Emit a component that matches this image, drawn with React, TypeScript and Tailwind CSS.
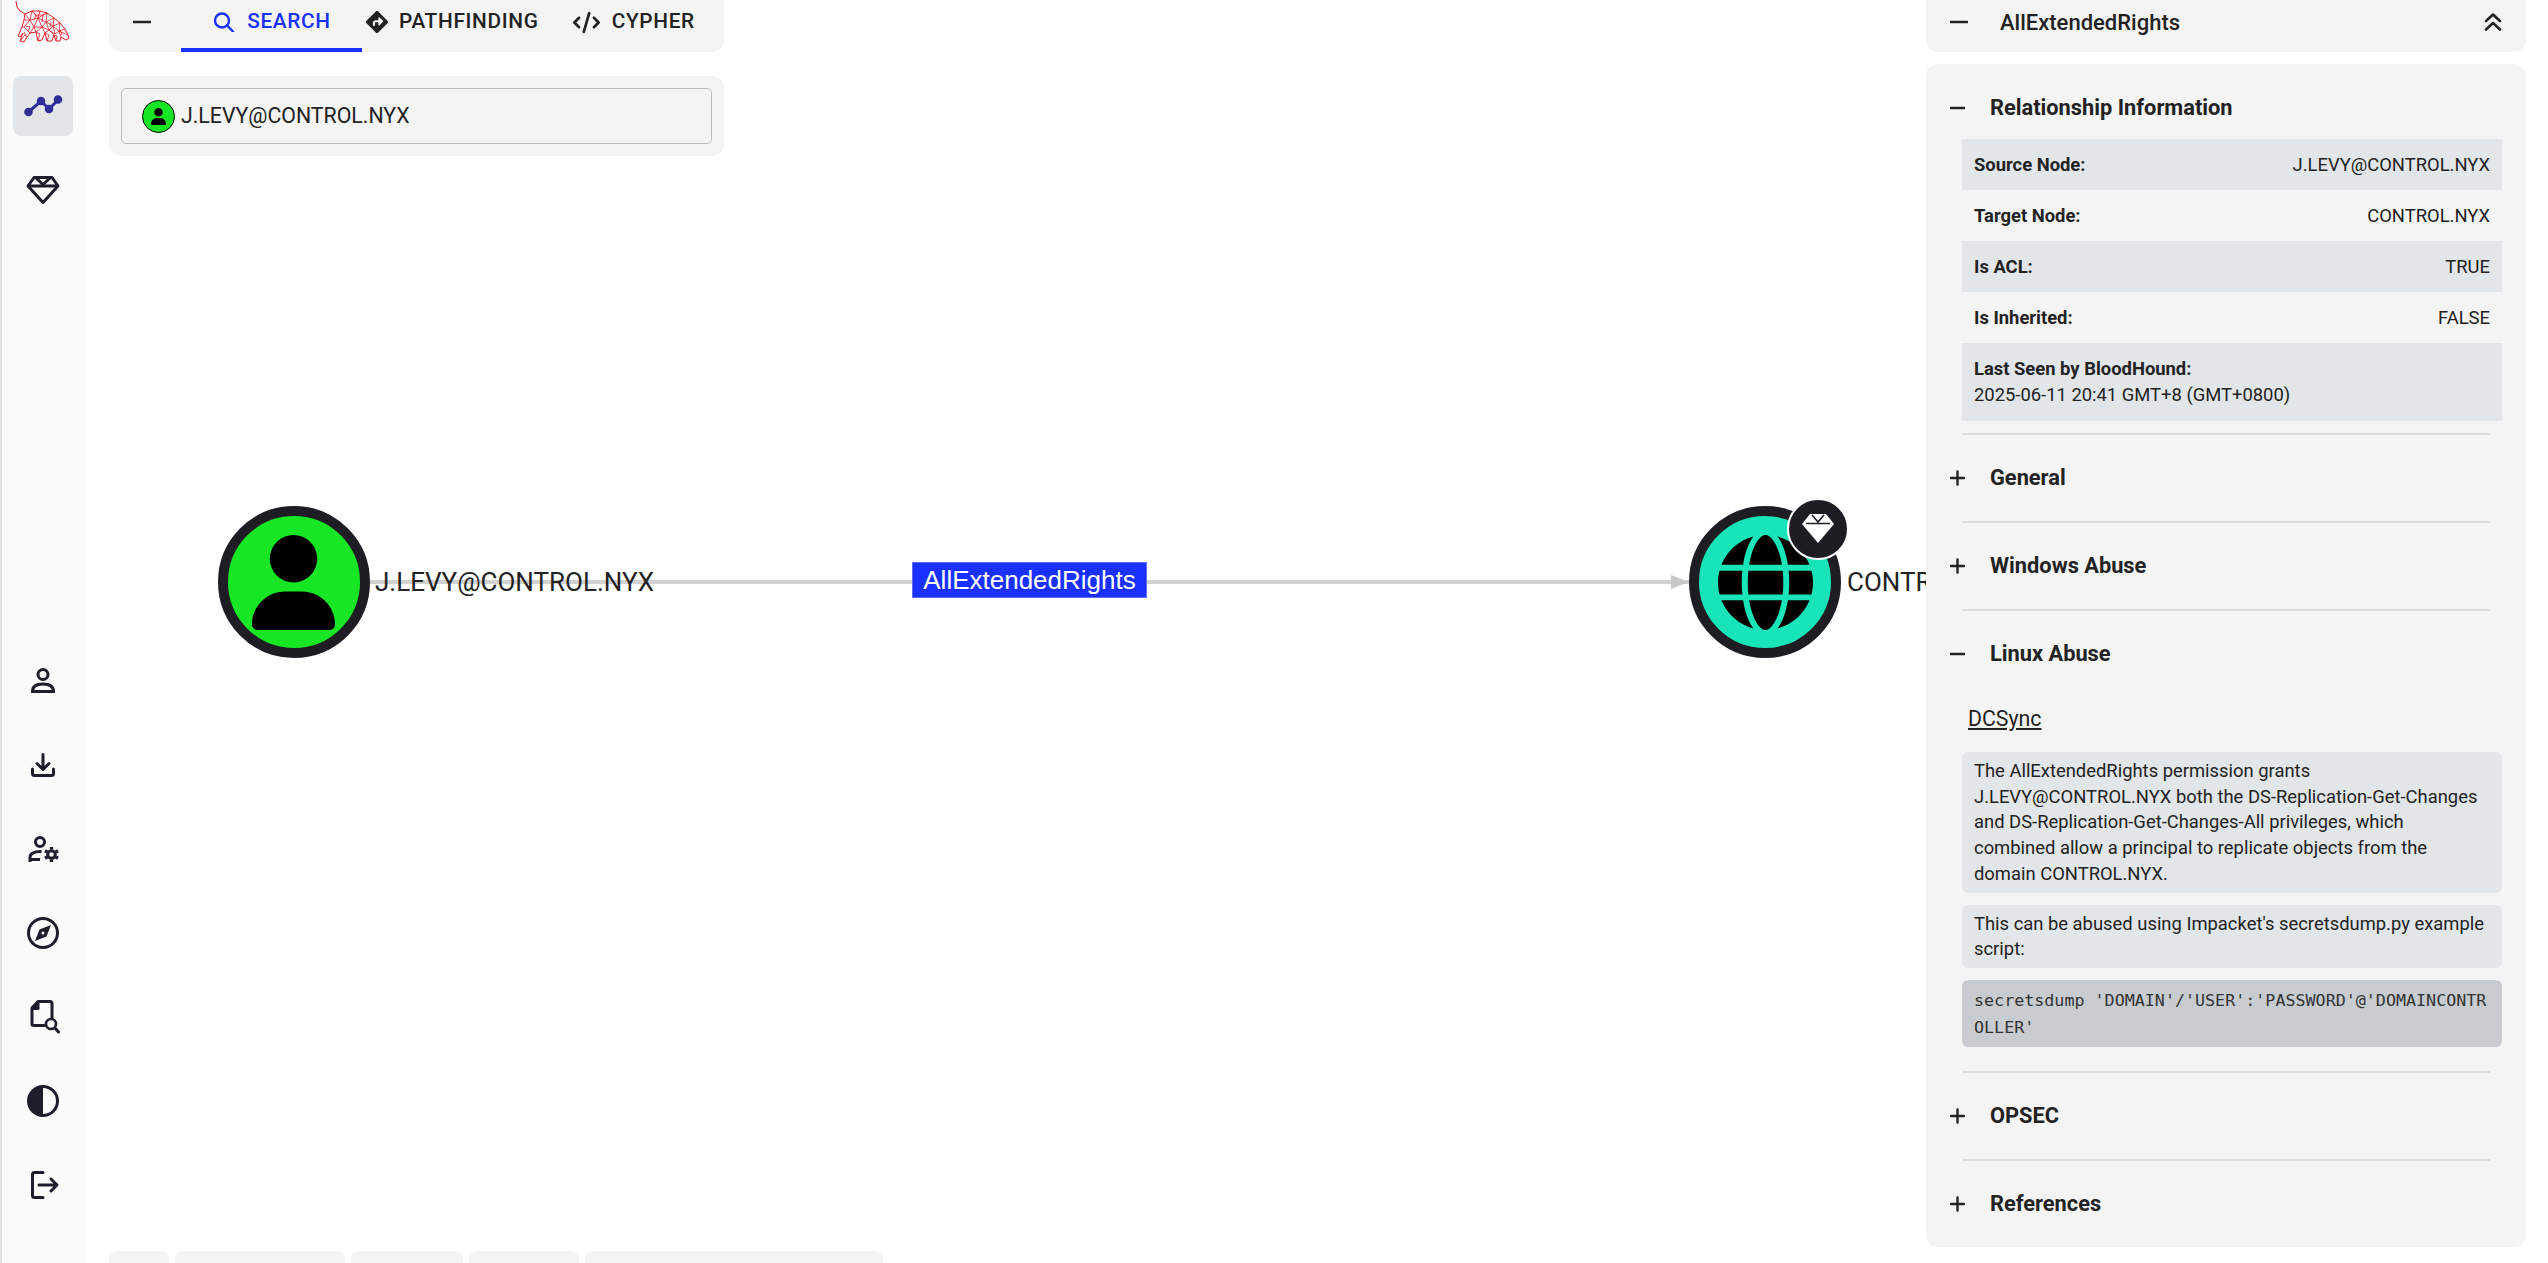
import React from "react";
import { FaUser, FaGlobe, FaDiamondTurnRight, FaCode } from "react-icons/fa6";

const Minus = ({ w = 15 }: { w?: number }) => (
  <svg width={w} height="18" viewBox={`0 0 ${w} 18`} className="shrink-0">
    <line x1="1" y1="9" x2={w - 1} y2="9" stroke="#222" strokeWidth="2.6" strokeLinecap="round" />
  </svg>
);
const Plus = () => (
  <svg width="15" height="18" viewBox="0 0 15 18" className="shrink-0">
    <path d="M1 9H14M7.5 2.5V15.5" stroke="#222" strokeWidth="2.4" strokeLinecap="round" />
  </svg>
);

const Logo = () => {
  const outline =
    "M16 1 L17 7 L20 11 L25 14 L32 11 L40 11 L47 13 L54 18 L60 23 L65 29 L68 35 L69 38 L66 40 L61 37 L60 41 L56 41 L54 35 L52 41 L47 41 L45 33 L42 40 L38 41 L36 32 L30 33 L27 37 L24 42 L20 41 L23 33 L20 37 L18 36 L22 27 L24 20 L25 14";
  const mesh =
    "M25 14 L30 20 L32 11 L38 18 L40 11 M30 20 L38 18 L47 13 L46 22 L54 18 L53 26 L60 23 L59 31 L65 29 M38 18 L46 22 L53 26 L59 31 L68 35 M30 20 L24 20 M30 20 L34 27 L38 18 L42 27 L46 22 L49 30 L53 26 L55 34 L59 31 L61 37 M34 27 L42 27 L49 30 L55 34 M34 27 L36 32 L42 27 L45 33 L49 30 L54 35 M34 27 L30 33 L24 27 L22 27 M30 20 L24 27 M38 41 L40 34 L36 32 M47 41 L49 35 L45 33 M56 41 L57 36 L54 35 M20 41 L25 35 L27 37 M32 11 L36 15 L43 15 L47 13 M43 15 L42 22 M36 15 L34 20 M26 26 L30 27 L28 32 M60 30 L62 35 M51 22 L50 27 M24 32 L26 36";
  return (
    <svg width="86" height="76" viewBox="0 0 86 76" className="shrink-0" fill="none" stroke="#e81c2a" strokeWidth="1">
      <path d={outline} />
      <path d={mesh} strokeWidth="0.8" />
    </svg>
  );
};

const c = "#1f1d2b";
const SideIcons: React.ReactNode[] = [
  <svg width="40" height="40" viewBox="0 0 40 40" fill="none" stroke={c} strokeWidth="3">
    <circle cx="20" cy="13.5" r="5" />
    <path d="M9.5 30.5C9.5 25.5 13.5 23 20 23S30.500 25.500 30.500 30.500Z" />
  </svg>,
  <svg width="40" height="40" viewBox="0 0 40 40" fill="none" stroke={c} strokeWidth="3" strokeLinecap="round" strokeLinejoin="round">
    <path d="M20 9.500V24M14 18.500L20 24.500L26 18.500" />
    <path d="M9.500 24V28.500Q9.500 30.500 11.500 30.500H28.500Q30.500 30.500 30.500 28.500V24" />
  </svg>,
  <svg width="40" height="40" viewBox="0 0 40 40" fill="none" stroke={c} strokeWidth="3">
    <circle cx="17" cy="13" r="4.500" />
    <path d="M7 31.500V28C7 25 11 22.500 17 22.500" strokeLinecap="square" />
    <path d="M6 30.500H17" />
    <circle cx="28.500" cy="25.500" r="3.800" strokeWidth="3" />
    <path
      d="M28.500 18V20.500M28.500 30.500V33M22 21.700L24.200 23M32.800 28L35 29.300M22 29.300L24.200 28M32.800 23L35 21.700"
      strokeWidth="3.400"
    />
  </svg>,
  <svg width="40" height="40" viewBox="0 0 40 40" fill="none">
    <circle cx="20" cy="20" r="14.500" stroke={c} strokeWidth="3" />
    <path d="M28 12L23.500 23.500L12 28L16.500 16.500Z" fill={c} />
    <circle cx="20" cy="20" r="1.500" fill="#fafafa" />
  </svg>,
  <svg width="40" height="40" viewBox="0 0 40 40" fill="none" stroke={c} strokeWidth="3" strokeLinecap="round" strokeLinejoin="round">
    <path d="M22 28.500H10.500Q9 28.500 9 27V11L15 4.500H27Q29 4.500 29 6.500V22" />
    <path d="M9.500 11.500L15 5.500V11.500Z" fill={c} />
    <circle cx="28" cy="27" r="5" fill="#fafafa" strokeWidth="2.600" />
    <path d="M32 31L35.500 35" />
  </svg>,
  <svg width="40" height="40" viewBox="0 0 40 40" fill="none">
    <circle cx="20" cy="20" r="14.500" stroke={c} strokeWidth="3" />
    <path d="M20 5A15 15 0 0 0 20 35Z" fill={c} />
  </svg>,
  <svg width="40" height="40" viewBox="0 0 40 40" fill="none" stroke={c} strokeWidth="3" strokeLinecap="round" strokeLinejoin="round">
    <path d="M20 7.500H11.500Q9.500 7.500 9.500 9.500V30.500Q9.500 32.500 11.500 32.500H20" />
    <path d="M16 20H33.500M28 14L34 20L28 26" />
  </svg>,
];

const Gem = () => (
  <svg width="40" height="40" viewBox="0 0 40 40" fill="none" stroke={c} strokeWidth="3" strokeLinejoin="round">
    <path d="M11 7.500H29L35 16L20 32.500L5 16Z" />
    <path d="M5 16H35M13 8L20 14.500L27 8" />
  </svg>
);

const Row = ({ label, value, shade }: { label: string; value: string; shade?: boolean }) => (
  <div className={`flex h-[51px] items-center justify-between px-3 ${shade ? "bg-[#e3e6e9]" : ""}`}>
    <span className="font-bold">{label}</span>
    <span>{value}</span>
  </div>
);

const Divider = () => <div className="ml-9 mr-9 h-[2px] bg-[#dcdcdc]" />;

const Header = ({ title, open, first }: { title: string; open?: boolean; first?: boolean }) => (
  <div className={`flex items-center pl-6 ${first ? "h-[75px] pt-[13px]" : "h-[86px]"}`}>
    <div className="w-10 shrink-0">{open ? <Minus /> : <Plus />}</div>
    <span className="text-[21.8px] font-bold text-[#222]">{title}</span>
  </div>
);

export default function App() {
  return (
    <div className="flex h-screen w-full overflow-hidden bg-white font-['Roboto',sans-serif] text-[#222]">
      <aside className="flex h-full w-[86px] shrink-0 flex-col items-center border-l-2 border-[#e2e2e2] bg-[#fafafa] pb-12">
        <div className="-ml-[2px]">
          <Logo />
        </div>
        <button className="-ml-[2px] flex h-[60px] w-[60px] items-center justify-center rounded-lg bg-[#e3e6e9]">
          <svg width="40" height="40" viewBox="0 0 40 40" fill="none" stroke="#2f2f96" strokeWidth="3">
            <path d="M5.500 26L18 15L26 23L36 13" />
            <circle cx="5.500" cy="26" r="2.800" fill="#2f2f96" />
            <circle cx="18" cy="15" r="2.800" fill="#2f2f96" />
            <circle cx="26" cy="23" r="2.800" fill="#2f2f96" />
            <circle cx="35" cy="13.500" r="2.800" fill="#2f2f96" />
          </svg>
        </button>
        <button className="-ml-[2px] mt-6 flex h-[60px] w-[60px] items-center justify-center">
          <Gem />
        </button>
        <div className="-ml-[2px] mt-auto flex flex-col gap-6">
          {SideIcons.map((icon, i) => (
            <button key={i} className="flex h-[60px] w-[60px] items-center justify-center">
              {icon}
            </button>
          ))}
        </div>
      </aside>

      <main className="relative h-full flex-1 overflow-hidden">
        {/* graph canvas */}
        <div className="absolute left-[284px] top-[580px] h-[4px] w-[1320px] bg-[#d2d2d2]" />
        <svg className="absolute left-[1584px] top-[574px]" width="20" height="16" viewBox="0 0 20 16">
          <path d="M1 1L19 8L1 15Z" fill="#c8c8c8" />
        </svg>
        <div className="absolute left-[131.500px] top-[506px] flex h-[152px] w-[152px] items-center justify-center rounded-full border-[10px] border-[#1f1d24] bg-[#17e625]">
          <FaUser size={95} color="#000" />
        </div>
        <span className="absolute left-[289px] top-[565px] text-[26px] leading-[34px] text-[#222]">J.LEVY@CONTROL.NYX</span>
        <div className="absolute left-[826px] top-[562px] flex h-[36px] w-[235px] items-center justify-center border border-[#5d6dff] bg-[#1a30ff] font-['Liberation_Sans',sans-serif] text-[26px] text-white">
          AllExtendedRights
        </div>
        <div className="absolute left-[1603px] top-[506px] flex h-[152px] w-[152px] items-center justify-center rounded-full border-[10px] border-[#1f1d24] bg-[#17e5b9]">
          <FaGlobe size={95} color="#000" />
        </div>
        <div className="absolute left-[1701px] top-[498px] flex h-[62px] w-[62px] items-center justify-center rounded-full border-2 border-white bg-[#1f1d24]">
          <svg width="34" height="32" viewBox="0 0 34 32">
            <path d="M9 1H25L33 11L17 30L1 11Z" fill="#fff" />
            <path d="M5 10.500H29M11 2L17 9L23 2" stroke="#1f1d24" strokeWidth="1.600" fill="none" />
          </svg>
        </div>
        <span className="absolute left-[1761px] top-[565px] text-[26px] leading-[34px] text-[#222]">CONTROL.NYX</span>

        {/* left overlay */}
        <div className="absolute left-[23px] top-0 flex w-[615px] flex-col gap-6">
          <div className="flex h-[52px] items-stretch rounded-b-xl bg-[#f4f4f4] text-[20.8px] font-medium tracking-[0.68px]">
            <div className="flex w-[72px] items-center pb-2 pl-6">
              <Minus w={18} />
            </div>
            <div className="flex w-[181px] items-center justify-center gap-3 border-b-4 border-[#1a30ff] pb-1 text-[#1a30ff]">
              <svg width="23" height="20" viewBox="0 0 23 20" fill="none" stroke="#1a30ff" strokeWidth="2.400">
                <circle cx="10" cy="8.500" r="7" />
                <path d="M15 13.500L21 19.500" strokeLinecap="round" />
              </svg>
              SEARCH
            </div>
            <div className="ml-1 flex items-center gap-[11px] pb-2">
              <FaDiamondTurnRight size={22} />
              PATHFINDING
            </div>
            <div className="ml-[34px] flex items-center gap-3 pb-2">
              <FaCode size={27} />
              CYPHER
            </div>
          </div>
          <div className="rounded-xl bg-[#f4f4f4] p-3">
            <div className="flex h-14 items-center gap-[6px] rounded-[5px] border border-[#bdbdbd] pl-5 text-[21.3px]">
              <div className="flex h-[33px] w-[33px] items-center justify-center rounded-full border border-black bg-[#17e625]">
                <FaUser size={17} color="#000" />
              </div>
              J.LEVY@CONTROL.NYX
            </div>
          </div>
        </div>

        {/* bottom chips */}
        <div className="absolute bottom-[-18px] left-[23px] flex gap-[6px]">
          <div className="h-[30px] w-[60px] rounded-t-lg bg-[#f4f4f4]" />
          <div className="h-[30px] w-[170px] rounded-t-lg bg-[#f4f4f4]" />
          <div className="h-[30px] w-[112px] rounded-t-lg bg-[#f4f4f4]" />
          <div className="h-[30px] w-[110px] rounded-t-lg bg-[#f4f4f4]" />
          <div className="h-[30px] w-[298px] rounded-t-lg bg-[#f4f4f4]" />
        </div>

        {/* right overlay */}
        <div className="absolute right-[22px] top-0 flex w-[600px] flex-col gap-3">
          <div className="flex h-[52px] items-center rounded-b-xl bg-[#f4f4f4] pb-2 pl-6 pr-6">
            <div className="w-[50px] shrink-0">
              <Minus w={18} />
            </div>
            <span className="flex-1 text-[22px] font-medium">AllExtendedRights</span>
            <svg width="18" height="20" viewBox="0 0 18 20" fill="none" stroke="#222" strokeWidth="2.600" strokeLinecap="round" strokeLinejoin="round">
              <path d="M2 9L9 2.500L16 9M2 17.500L9 11L16 17.500" />
            </svg>
          </div>
          <div className="rounded-xl bg-[#f4f4f4] text-[18.4px] leading-[25.7px] text-[#222]">
            <Header title="Relationship Information" open first />
            <div className="ml-9 mr-6">
              <Row label="Source Node:" value="J.LEVY@CONTROL.NYX" shade />
              <Row label="Target Node:" value="CONTROL.NYX" />
              <Row label="Is ACL:" value="TRUE" shade />
              <Row label="Is Inherited:" value="FALSE" />
              <div className="flex h-[78px] flex-col justify-center bg-[#e3e6e9] px-3">
                <span className="font-bold">Last Seen by BloodHound:</span>
                <span>2025-06-11 20:41 GMT+8 (GMT+0800)</span>
              </div>
            </div>
            <div className="mt-3">
              <Divider />
            </div>
            <Header title="General" />
            <Divider />
            <Header title="Windows Abuse" />
            <Divider />
            <Header title="Linux Abuse" open />
            <div className="ml-9 mr-6 flex flex-col gap-3">
              <span className="mb-2 ml-[6px] mt-2 text-[21.3px] leading-[27px] underline">DCSync</span>
              <p className="rounded-md bg-[#e3e6e9] py-[6px] pl-3 pr-[18px]">
                The AllExtendedRights permission grants J.LEVY@CONTROL.NYX both the DS-Replication-Get-Changes and DS-Replication-Get-Changes-All privileges, which combined allow a principal to replicate objects from the domain CONTROL.NYX.
              </p>
              <p className="rounded-md bg-[#e3e6e9] py-[6px] pl-3 pr-[18px]">
                This can be abused using Impacket's secretsdump.py example script:
              </p>
              <pre className="whitespace-pre-wrap break-all rounded-md bg-[#c8ccd1] px-3 pb-[6px] pt-[7px] font-['DejaVu_Sans_Mono',monospace] text-[16.7px] leading-[27px] text-[#333]">
                secretsdump 'DOMAIN'/'USER':'PASSWORD'@'DOMAINCONTROLLER'
              </pre>
            </div>
            <div className="mt-6">
              <Divider />
            </div>
            <Header title="OPSEC" />
            <Divider />
            <Header title="References" />
          </div>
        </div>
      </main>
    </div>
  );
}
